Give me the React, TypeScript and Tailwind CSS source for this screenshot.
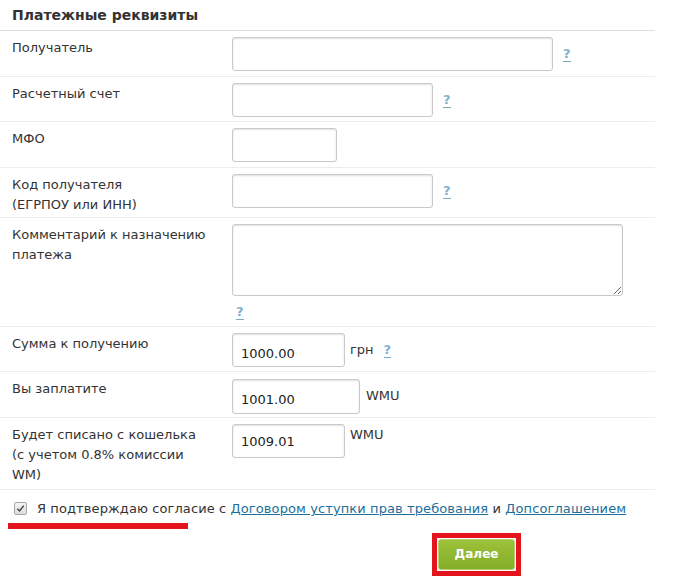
import React from "react";

const Help = ({ className = "ml-[10px]" }: { className?: string }) => (
  <span className={`${className} cursor-help border-b border-[#7fa9c2] text-[13px] font-bold leading-[14px] text-[#7fb2d0]`}>?</span>
);

const inputCls =
  "h-[34px] rounded-[3px] border border-[#c9c9c9] bg-white px-[8px] text-[13px] text-[#222] shadow-[inset_0_1px_2px_rgba(0,0,0,0.12)] outline-none";

function Row({
  label,
  children,
  h,
}: {
  label: React.ReactNode;
  children: React.ReactNode;
  h: string;
}) {
  return (
    <div className={`flex border-b border-[#ececec] ${h}`}>
      <div className="w-[232px] shrink-0 pl-[12px] pr-2 pt-[7px] leading-[20px]">{label}</div>
      <div className="flex-1 pt-[6px]">{children}</div>
    </div>
  );
}

export default function App() {
  return (
    <div className="h-[579px] w-[700px] overflow-hidden bg-white text-[13px] text-[#333] [font-family:'DejaVu_Sans',Verdana,sans-serif]">
      <div className="w-[655px]">
        <div className="flex h-[31px] items-center border-b border-[#dedede] pl-[12px] text-[14px] font-bold text-[#333]">
          Платежные реквизиты
        </div>
        <Row label="Получатель" h="h-[46px]">
          <div className="flex items-center">
            <input className={`${inputCls} w-[321px]`} />
            <Help />
          </div>
        </Row>
        <Row label="Расчетный счет" h="h-[45px]">
          <div className="flex items-center">
            <input className={`${inputCls} w-[201px]`} />
            <Help />
          </div>
        </Row>
        <Row label="МФО" h="h-[46px]">
          <input className={`${inputCls} w-[105px]`} />
        </Row>
        <Row
          label={
            <>
              Код получателя
              <br />
              (ЕГРПОУ или ИНН)
            </>
          }
          h="h-[50px]"
        >
          <div className="flex items-center">
            <input className={`${inputCls} w-[201px]`} />
            <Help />
          </div>
        </Row>
        <Row
          label={
            <>
              Комментарий к назначению
              <br />
              платежа
            </>
          }
          h="h-[109px]"
        >
          <div className="flex flex-col items-start">
            <textarea className={`${inputCls} mb-[9px] h-[72px] w-[391px] resize`} />
            <Help className="ml-[4px]" />
          </div>
        </Row>
        <Row label="Сумма к получению" h="h-[45px]">
          <div className="flex items-center">
            <input className={`${inputCls} w-[113px] pt-[6px]`} defaultValue="1000.00" />
            <span className="ml-[5px] text-[#333]">грн</span>
            <Help />
          </div>
        </Row>
        <Row label="Вы заплатите" h="h-[46px]">
          <div className="flex items-start">
            <input
              className={`${inputCls} mt-[1px] h-[35px] w-[128px] bg-[#ebebe4] pt-[6px]`}
              defaultValue="1001.00"
              readOnly
            />
            <span className="ml-[6px] mt-[8px]">WMU</span>
          </div>
        </Row>
        <Row
          label={
            <>
              Будет списано с кошелька
              <br />
              (с учетом 0.8% комиссии
              <br />
              WM)
            </>
          }
          h="h-[72px]"
        >
          <div className="flex items-start">
            <input className={`${inputCls} w-[113px]`} defaultValue="1009.01" />
            <span className="ml-[5px] mt-[1px]">WMU</span>
          </div>
        </Row>
        <div className="flex items-center pl-[14px] pt-[9px]">
          <span className="flex h-[13px] w-[13px] items-center justify-center rounded-[2px] border border-[#a8a8a8] bg-gradient-to-b from-[#f4f4f4] to-[#dcdcdc]">
            <svg viewBox="0 0 10 10" className="h-[9px] w-[9px]">
              <path d="M1.5 5.2 L4 7.6 L8.6 2" fill="none" stroke="#4a4a4a" strokeWidth="1.6" />
            </svg>
          </span>
          <span className="ml-[10px] tracking-[0.1px]">
            Я подтверждаю согласие с{" "}
            <a className="text-[#1c6f9a] underline">Договором уступки прав требования</a> и{" "}
            <a className="text-[#1c6f9a] underline">Допсоглашением</a>
          </span>
        </div>
      </div>
      <div className="ml-[8px] mt-[4px] h-[6px] w-[180px] bg-[#e3141b]" />
      <div className="ml-[432px] mt-[4px] w-[89px] border-[5px] border-[#e3141b] p-[1px]">
        <button className="flex h-[31px] w-full items-center justify-center rounded-[3px] border border-[#b6cf73] bg-gradient-to-b from-[#9cc23b] to-[#86ad27] text-[12px] font-bold text-white">
          Далее
        </button>
      </div>
    </div>
  );
}
